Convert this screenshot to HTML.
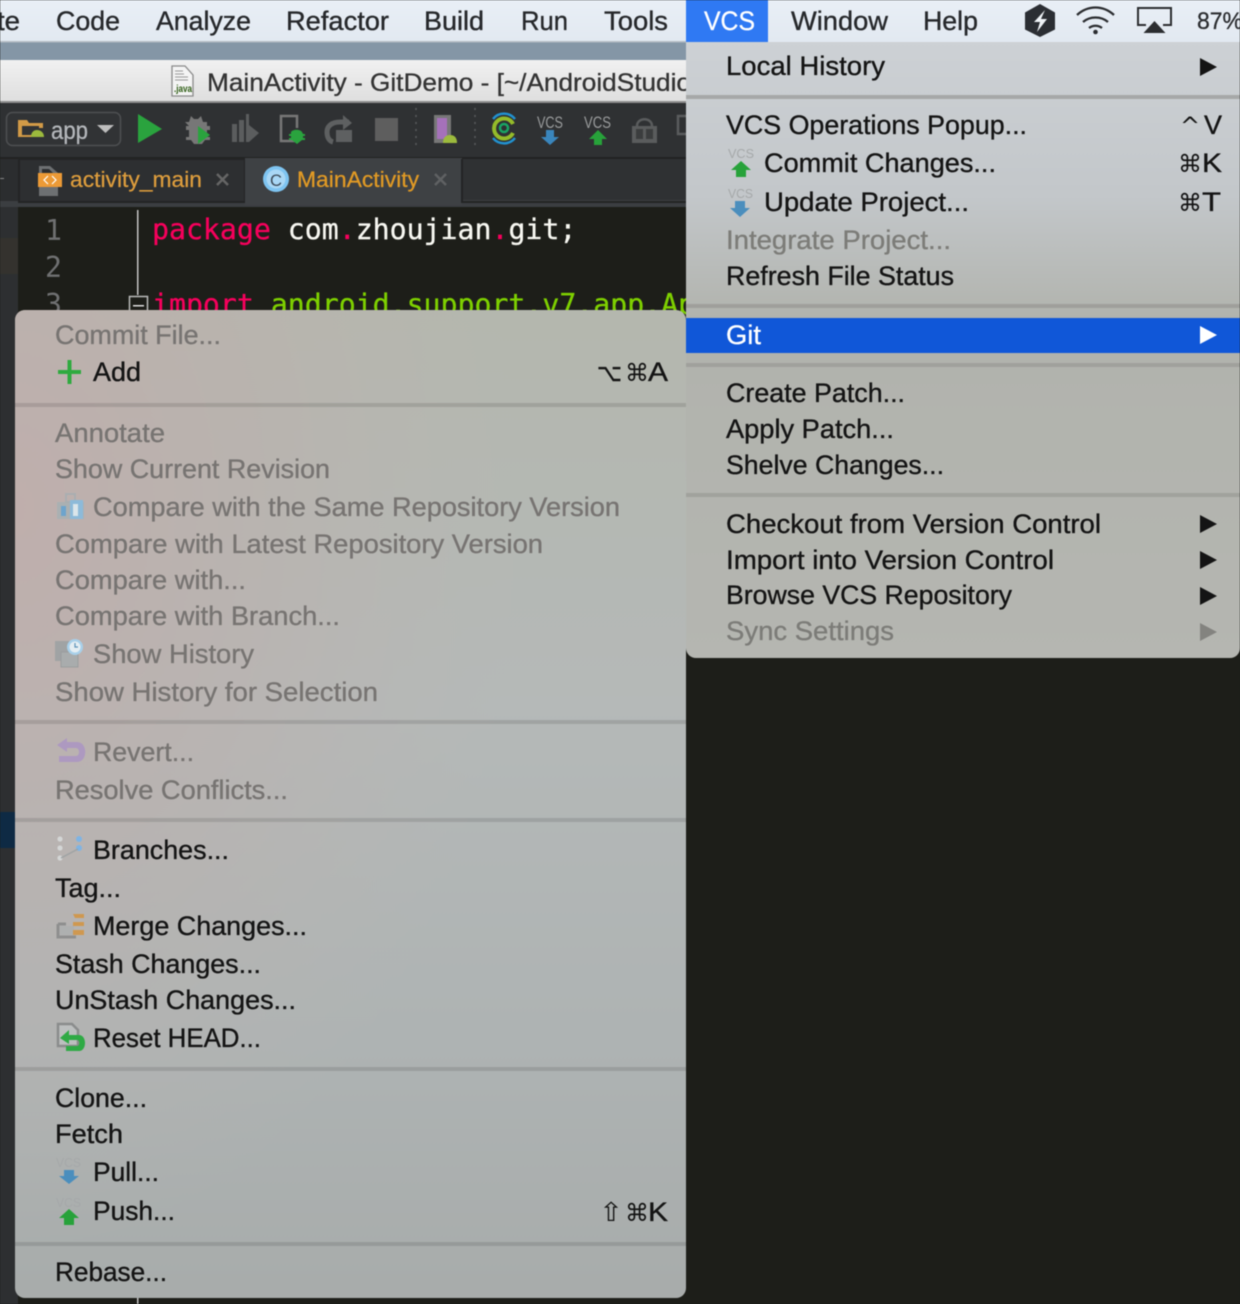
<!DOCTYPE html>
<html><head><meta charset="utf-8"><title>VCS Git menu</title>
<style>
html,body{margin:0;padding:0;background:#1d1e19;width:1240px;height:1304px;overflow:hidden}
svg{display:block;position:absolute;left:0;top:0;filter:blur(.4px)}
text{font-family:"Liberation Sans","DejaVu Sans",sans-serif;font-size:27px;fill:#141414}
text:not([style]):not(.c){stroke:#141414;stroke-width:.35px}
text.d:not([style]){fill:#777472;stroke:#777472}
text.dr:not([style]){fill:#7c7c78;stroke:#7c7c78}
text.m:not([style]){fill:#26282b;stroke:#26282b}
.c{font-family:"DejaVu Sans Mono","Liberation Mono",monospace;font-size:28.200px;stroke-width:.3px}
</style></head><body>
<svg width="1240" height="1304" viewBox="0 0 1240 1304" xmlns="http://www.w3.org/2000/svg">
<defs>
<linearGradient id="bar" x1="0" y1="0" x2="0" y2="1"><stop offset="0" stop-color="#e9eff6"/><stop offset="1" stop-color="#e2e9f1"/></linearGradient>
<linearGradient id="title" x1="0" y1="0" x2="0" y2="1"><stop offset="0" stop-color="#f1f1f1"/><stop offset="1" stop-color="#dedede"/></linearGradient>
<linearGradient id="rm" x1="0" y1="0" x2="0" y2="1"><stop offset="0" stop-color="#cdd1d5"/><stop offset=".25" stop-color="#c3c7ca"/><stop offset=".45" stop-color="#b1b3ad"/><stop offset="1" stop-color="#b5b6b1"/></linearGradient>
<linearGradient id="lm" x1="0" y1="0" x2="0" y2="1"><stop offset="0" stop-color="#b4b7ae"/><stop offset=".4" stop-color="#b5b9b8"/><stop offset=".75" stop-color="#aeb3b3"/><stop offset="1" stop-color="#a8acab"/></linearGradient>
<radialGradient id="pink" cx="0" cy=".2" r=".75"><stop offset="0" stop-color="#c0aeac" stop-opacity=".95"/><stop offset=".5" stop-color="#bdb0ad" stop-opacity=".5"/><stop offset="1" stop-color="#bcb6b2" stop-opacity="0"/></radialGradient>
</defs>

<!-- background -->
<rect width="1240" height="1304" fill="#1d1e19"/>
<rect y="42" width="1240" height="18" fill="#8496a6"/>
<rect y="60" width="1240" height="42" fill="url(#title)"/>
<rect y="101" width="1240" height="2" fill="#8e8e8e"/>
<rect y="103" width="1240" height="55" fill="#2f3133"/>
<rect y="157" width="1240" height="2" fill="#222"/>
<rect y="159" width="1240" height="48" fill="#2f3133"/>
<rect y="200" width="690" height="7" fill="#3b3e41"/>
<rect x="0" y="207" width="18" height="1097" fill="#2d2f31"/>
<rect x="0" y="159" width="18" height="42" fill="#2b2d2f"/>
<rect x="0" y="178" width="4" height="1" fill="#888"/>
<rect x="0" y="238" width="18" height="36" fill="#34322e"/>
<rect x="0" y="812" width="18" height="36" fill="#0e2a44"/>

<!-- title -->
<path d="M172 66h13l8 9v21h-21z" fill="#f4f4f4" stroke="#8a8a8a" stroke-width="1.300"/>
<path d="M175 71h8M175 74h9M175 77h13M175 80h13" stroke="#999"/>
<text x="174" y="92" style="font-size:10px;fill:#2e5d14;font-weight:bold" textLength="18" lengthAdjust="spacingAndGlyphs">.java</text>
<text x="207" y="91" style="font-size:25px;fill:#333;stroke:#333;stroke-width:.3px" textLength="484" lengthAdjust="spacingAndGlyphs">MainActivity - GitDemo - [~/AndroidStudio</text>

<!-- toolbar -->
<rect x="6.500" y="112.500" width="114" height="33" rx="6" fill="#313335" stroke="#4d4f51" stroke-width="1.500"/>
<path d="M18 135v-15h9l2 3h14v5h-4v-2H22v9z M18 135h14v2H18z" fill="#d19a47"/>
<path d="M31 137c0-5 3-7 6-7s7 2 7 7z" fill="#9cba3d"/>
<text x="51" y="139" style="font-size:25px;fill:#b5b8bc;stroke:#b5b8bc;stroke-width:.3px" textLength="37" lengthAdjust="spacingAndGlyphs">app</text>
<path d="M97 125h17l-8.500 8z" fill="#bdbdbd"/>
<path d="M138 114l24 15-24 14z" fill="#2aa33e"/>
<path d="M185 122h4l2-6 3 3h4l3-3 2 6h4v4h3v4h-3v7h3v3h-5l-3 4h-8l-3-4h-5v-3h3v-7h-3v-4h3z" fill="#777"/>
<path d="M198 126l12 9-12 9z" fill="#2aa33e"/>
<path d="M232 124h5v18h-5zM239 120h5v22h-5zM246 114h3v11l10 8-10 9h-3z" fill="#5b5d5e"/>
<path d="M297 128v-12h-16v25h14" fill="none" stroke="#777" stroke-width="2.500"/>
<path d="M291 132c2-3 9-3 11 0l1 2 2 0v2h-2v2h2v2h-3l-5 4-5-4h-3v-2h2v-2h-2v-2h2z" fill="#2aa33e"/>
<path d="M349 122h-9c-8 0-13 4-13 10 0 5 2 9 6 10" fill="none" stroke="#5e6061" stroke-width="5"/>
<path d="M343 115l9 8-9 7z" fill="#5e6061"/>
<rect x="336" y="130" width="16" height="12" fill="#5e6061"/>
<rect x="375" y="118" width="23" height="23" fill="#5e5e5e"/>
<path d="M416 108v42M475 108v42" stroke="#5a5c5e" stroke-width="1.500" stroke-dasharray="2 5"/>
<rect x="434" y="115" width="17" height="28" fill="#777"/>
<rect x="437" y="118" width="10" height="21" fill="#a571ba"/>
<path d="M443 143c0-6 3-8 7-8s7 2 7 8z" fill="#9cba3d"/>
<path d="M493 119a14 14 0 0 1 22 0M493 138a14 14 0 0 0 22 0" fill="none" stroke="#2291cf" stroke-width="2.500"/>
<path d="M513 124a10 10 0 1 0 0 9" fill="none" stroke="#94bb2a" stroke-width="4"/>
<circle cx="504" cy="128" r="4" fill="none" stroke="#19a463" stroke-width="2.500"/>
<text x="537" y="128" style="font-size:17px;fill:#9a9c9d" textLength="26" lengthAdjust="spacingAndGlyphs">VCS</text>
<path d="M546 130h8v7h5l-9 8-9-8h5z" fill="#3a86bd"/>
<text x="584" y="128" style="font-size:17px;fill:#9a9c9d" textLength="27" lengthAdjust="spacingAndGlyphs">VCS</text>
<path d="M598 130l9 9h-5v6h-8v-6h-5z" fill="#27a23a"/>
<path d="M632 126h25v17h-25z" fill="#5a5c5d"/>
<path d="M637 126c0-9 15-9 15 0" fill="none" stroke="#5a5c5d" stroke-width="2.500"/>
<path d="M636 129h7v10h-7zM646 129h7v10h-7z" fill="#3b3d3e"/>
<path d="M678 116h10v18h-10z" fill="none" stroke="#5a5c5d" stroke-width="2.500"/>

<!-- tabs -->
<path d="M19 159H245V202H19z" fill="#2d2f31" stroke="#232425" stroke-width="2"/>
<path d="M39 166h11l8 7v23H39z" fill="#6d7072"/>
<path d="M42 169h7l5 5v6H42z" fill="#2d2f31"/>
<rect x="38" y="173" width="24" height="14" fill="#ec9a36"/>
<path d="M48 176l-4 4 4 4M52 176l4 4-4 4" fill="none" stroke="#fff" stroke-width="1.200"/>
<text x="70" y="187" style="font-size:22px;fill:#dd9d3d;stroke:#dd9d3d;stroke-width:.25px" textLength="132" lengthAdjust="spacingAndGlyphs">activity_main</text>
<path d="M217 174l11 11M228 174l-11 11" stroke="#666" stroke-width="2.500"/>
<rect x="245" y="158" width="217" height="47" fill="#3e4144"/>
<path d="M462 159v43H690" fill="none" stroke="#232425" stroke-width="2"/>
<circle cx="276" cy="179" r="13" fill="#7ec4f1"/>
<circle cx="276" cy="179" r="9.500" fill="#a9d7f5"/>
<text x="270" y="186" style="font-size:17px;fill:#3c4a58" textLength="12" lengthAdjust="spacingAndGlyphs">C</text>
<text x="297" y="187" style="font-size:22px;fill:#e19a25;stroke:#e19a25;stroke-width:.25px" textLength="122" lengthAdjust="spacingAndGlyphs">MainActivity</text>
<path d="M435 174l11 11M446 174l-11 11" stroke="#5f6163" stroke-width="2.500"/>

<!-- editor -->
<rect x="18" y="207" width="672" height="110" fill="#1d1e19"/>
<text class="c" x="45" y="240" style="fill:#6f7071" textLength="17">1</text>
<text class="c" x="45" y="277" style="fill:#6f7071" textLength="17">2</text>
<text class="c" x="45" y="314" style="fill:#6f7071" textLength="17">3</text>
<rect x="137" y="210" width="1.500" height="85" fill="#c3c3c3"/>
<rect x="137" y="1296" width="1.500" height="8" fill="#c3c3c3"/>
<rect x="129.500" y="296.500" width="18" height="18" fill="#1d1e19" stroke="#bbb" stroke-width="1.500"/>
<rect x="133" y="305" width="11" height="1.500" fill="#ddd"/>
<text class="c" x="152" y="239"><tspan fill="#f7005c" stroke="#f7005c">package</tspan><tspan fill="#f8f8f2" stroke="#f8f8f2" dx="17">com</tspan><tspan fill="#f7005c" stroke="#f7005c">.</tspan><tspan fill="#f8f8f2" stroke="#f8f8f2">zhoujian</tspan><tspan fill="#f7005c" stroke="#f7005c">.</tspan><tspan fill="#f8f8f2" stroke="#f8f8f2">git;</tspan></text>
<text class="c" x="152" y="314"><tspan fill="#f7005c" stroke="#f7005c">import</tspan><tspan fill="#7ed000" stroke="#7ed000" dx="17">android.support.v7.app.AppCompat</tspan></text>

<!-- menu bar -->
<rect width="1240" height="42" fill="url(#bar)"/>
<rect y="41" width="686" height="1.500" fill="#b4bcc4"/>
<rect x="686" width="82" height="42" fill="#2f79f3"/>
<text class="m" x="-3" y="30" textLength="23" lengthAdjust="spacingAndGlyphs">te</text>
<text class="m" x="56" y="30" textLength="64" lengthAdjust="spacingAndGlyphs">Code</text>
<text class="m" x="156" y="30" textLength="95" lengthAdjust="spacingAndGlyphs">Analyze</text>
<text class="m" x="286" y="30" textLength="103" lengthAdjust="spacingAndGlyphs">Refactor</text>
<text class="m" x="424" y="30" textLength="60" lengthAdjust="spacingAndGlyphs">Build</text>
<text class="m" x="521" y="30" textLength="47" lengthAdjust="spacingAndGlyphs">Run</text>
<text class="m" x="604" y="30" textLength="64" lengthAdjust="spacingAndGlyphs">Tools</text>
<text x="704" y="30" style="fill:#fff;stroke:#fff;stroke-width:.3px" textLength="51" lengthAdjust="spacingAndGlyphs">VCS</text>
<text class="m" x="791" y="30" textLength="97" lengthAdjust="spacingAndGlyphs">Window</text>
<text class="m" x="923" y="30" textLength="55" lengthAdjust="spacingAndGlyphs">Help</text>
<path d="M1040 4l15 8.500v17L1040 37l-15-7.500v-17z" fill="#2b2e33"/>
<path d="M1045 10l-11 12h6l-3 10 10-13h-6z" fill="#eef2f6"/>
<path d="M1077 15c11-10 26-10 37 0M1083 22c7-6 18-6 25 0M1089 28c4-3 9-3 13 0" fill="none" stroke="#2b2d30" stroke-width="2.300"/>
<circle cx="1095.500" cy="32" r="2.300" fill="#2b2d30"/>
<path d="M1146 25h-8V8h33v17h-8" fill="none" stroke="#2b2d30" stroke-width="2"/>
<path d="M1154.500 21l11 12h-22z" fill="#2b2d30"/>
<text x="1197" y="29" style="font-size:24px;fill:#2b2d30;stroke:#2b2d30;stroke-width:.3px" textLength="46" lengthAdjust="spacingAndGlyphs">87%</text>

<!-- right menu -->
<path d="M686 42H1240V648a10 10 0 0 1-10 10H696a10 10 0 0 1-10-10z" fill="url(#rm)"/>
<rect x="686" y="95" width="554" height="4" fill="#a6a8a8"/>
<rect x="686" y="304" width="554" height="4" fill="#9f9f9b"/>
<rect x="686" y="318" width="554" height="35" fill="#1057d8"/>
<rect x="686" y="363" width="554" height="4" fill="#a0a19c"/>
<rect x="686" y="493" width="554" height="4" fill="#a1a29d"/>
<text x="726" y="75" textLength="159" lengthAdjust="spacingAndGlyphs">Local History</text>
<path d="M1200 58l17 9-17 9z" fill="#141414"/>
<text x="726" y="134" textLength="301" lengthAdjust="spacingAndGlyphs">VCS Operations Popup...</text>
<text x="1180" y="134" style="font-family:'DejaVu Sans',sans-serif;font-size:24px" textLength="18">^</text>
<text x="1204" y="134" textLength="18" lengthAdjust="spacingAndGlyphs">V</text>
<text x="728" y="158" style="font-size:13px;fill:#a5a8a9" textLength="26" lengthAdjust="spacingAndGlyphs">VCS</text>
<path d="M741 161l10 9h-5v7h-10v-7h-5z" fill="#27a23a"/>
<text x="764" y="172" textLength="232" lengthAdjust="spacingAndGlyphs">Commit Changes...</text>
<text x="1178" y="172" style="font-family:'DejaVu Sans',sans-serif;font-size:24px" textLength="22">⌘</text>
<text x="1202" y="172" textLength="20" lengthAdjust="spacingAndGlyphs">K</text>
<text x="728" y="198" style="font-size:13px;fill:#a5a8a9" textLength="25" lengthAdjust="spacingAndGlyphs">VCS</text>
<path d="M735 201h10v7h5l-10 9-10-9h5z" fill="#4b8ebd"/>
<text x="764" y="211" textLength="205" lengthAdjust="spacingAndGlyphs">Update Project...</text>
<text x="1178" y="211" style="font-family:'DejaVu Sans',sans-serif;font-size:24px" textLength="22">⌘</text>
<text x="1202" y="211" textLength="19" lengthAdjust="spacingAndGlyphs">T</text>
<text class="dr" x="726" y="249" textLength="225" lengthAdjust="spacingAndGlyphs">Integrate Project...</text>
<text x="726" y="285" textLength="228" lengthAdjust="spacingAndGlyphs">Refresh File Status</text>
<text x="726" y="344" style="fill:#fff;stroke:#fff;stroke-width:.3px" textLength="35" lengthAdjust="spacingAndGlyphs">Git</text>
<path d="M1200 326l17 9-17 9z" fill="#fff"/>
<text x="726" y="402" textLength="179" lengthAdjust="spacingAndGlyphs">Create Patch...</text>
<text x="726" y="438" textLength="168" lengthAdjust="spacingAndGlyphs">Apply Patch...</text>
<text x="726" y="474" textLength="218" lengthAdjust="spacingAndGlyphs">Shelve Changes...</text>
<text x="726" y="533" textLength="375" lengthAdjust="spacingAndGlyphs">Checkout from Version Control</text>
<path d="M1200 515l17 9-17 9z" fill="#141414"/>
<text x="726" y="569" textLength="328" lengthAdjust="spacingAndGlyphs">Import into Version Control</text>
<path d="M1200 551l17 9-17 9z" fill="#141414"/>
<text x="726" y="604" textLength="286" lengthAdjust="spacingAndGlyphs">Browse VCS Repository</text>
<path d="M1200 587l17 9-17 9z" fill="#141414"/>
<text class="dr" x="726" y="640" textLength="168" lengthAdjust="spacingAndGlyphs">Sync Settings</text>
<path d="M1200 623l17 9-17 9z" fill="#83837f"/>

<!-- left menu -->
<rect x="15" y="310" width="671" height="988" rx="10" fill="url(#lm)"/>
<rect x="15" y="310" width="671" height="988" rx="10" fill="url(#pink)"/>
<g fill="#000" fill-opacity=".11">
<rect x="15" y="403" width="671" height="4"/>
<rect x="15" y="720" width="671" height="4"/>
<rect x="15" y="818" width="671" height="4"/>
<rect x="15" y="1067" width="671" height="4"/>
<rect x="15" y="1242" width="671" height="4"/>
</g>
<text class="d" x="55" y="344" textLength="166" lengthAdjust="spacingAndGlyphs">Commit File...</text>
<path d="M58 372h23M69.500 360v24" stroke="#2faa3f" stroke-width="4"/>
<text x="93" y="381" textLength="48" lengthAdjust="spacingAndGlyphs">Add</text>
<text x="597" y="381" style="font-family:'DejaVu Sans',sans-serif;font-size:24px;fill:#141414;stroke:#141414;stroke-width:.4px" textLength="25" lengthAdjust="spacingAndGlyphs">⌥</text>
<text x="625" y="381" style="font-family:'DejaVu Sans',sans-serif;font-size:24px" textLength="22">⌘</text>
<text x="648" y="381" textLength="20" lengthAdjust="spacingAndGlyphs">A</text>
<text class="d" x="55" y="442" textLength="110" lengthAdjust="spacingAndGlyphs">Annotate</text>
<text class="d" x="55" y="478" textLength="275" lengthAdjust="spacingAndGlyphs">Show Current Revision</text>
<rect x="57" y="502" width="27" height="17" fill="#aab0b2"/>
<rect x="66" y="494" width="9" height="8" fill="none" stroke="#a9aeb0" stroke-width="2"/>
<rect x="70" y="500" width="13" height="19" fill="#8dbad9"/>
<rect x="61" y="506" width="5" height="10" fill="#6da4cc"/><rect x="73" y="504" width="5" height="12" fill="#dbe5ea"/>
<text class="d" x="93" y="516" textLength="527" lengthAdjust="spacingAndGlyphs">Compare with the Same Repository Version</text>
<text class="d" x="55" y="553" textLength="488" lengthAdjust="spacingAndGlyphs">Compare with Latest Repository Version</text>
<text class="d" x="55" y="589" textLength="191" lengthAdjust="spacingAndGlyphs">Compare with...</text>
<text class="d" x="55" y="625" textLength="285" lengthAdjust="spacingAndGlyphs">Compare with Branch...</text>
<rect x="55" y="641" width="20" height="20" fill="#a0a3a4"/>
<rect x="61" y="652" width="17" height="15" fill="#a9acad" stroke="#9a9d9e"/>
<circle cx="75" cy="647" r="8" fill="#a8d0ea"/><circle cx="75" cy="647" r="5.500" fill="#e5eef3"/>
<path d="M75 643v4h3" stroke="#5d92b8" fill="none" stroke-width="1.200"/>
<text class="d" x="93" y="663" textLength="161" lengthAdjust="spacingAndGlyphs">Show History</text>
<text class="d" x="55" y="701" textLength="323" lengthAdjust="spacingAndGlyphs">Show History for Selection</text>
<path d="M67 738l-10 7 10 7v-4h9c4 0 4 8 0 8H59v6h18c11 0 11-20 0-20H67z" fill="#ad99c0"/>
<text class="d" x="93" y="761" textLength="101" lengthAdjust="spacingAndGlyphs">Revert...</text>
<text class="d" x="55" y="799" textLength="233" lengthAdjust="spacingAndGlyphs">Resolve Conflicts...</text>
<g fill="#d4d6d6"><circle cx="60" cy="839" r="2.600"/><circle cx="60" cy="848" r="2.600"/><circle cx="60" cy="858" r="2.600"/></g>
<g fill="#7fb4e4"><circle cx="79" cy="839" r="3"/><circle cx="79" cy="848" r="3"/></g>
<path d="M61 858l17-9" stroke="#9fa3a4" stroke-width="1.500"/>
<text x="93" y="859" textLength="136" lengthAdjust="spacingAndGlyphs">Branches...</text>
<text x="55" y="897" textLength="66" lengthAdjust="spacingAndGlyphs">Tag...</text>
<path d="M58 924h8M58 924v13h18" fill="none" stroke="#8e8f8f" stroke-width="3"/>
<rect x="60" y="926" width="14" height="9" fill="#aeb0b0"/>
<path d="M73 914h11v4h-9zM73 922h11v4H73zM73 930h11v5H73z" fill="#cf9850"/>
<text x="93" y="935" textLength="214" lengthAdjust="spacingAndGlyphs">Merge Changes...</text>
<text x="55" y="973" textLength="206" lengthAdjust="spacingAndGlyphs">Stash Changes...</text>
<text x="55" y="1009" textLength="241" lengthAdjust="spacingAndGlyphs">UnStash Changes...</text>
<path d="M58 1024h14l6 6v16H58z" fill="#bcbfbf" stroke="#8a8c8c" stroke-width="2.500"/>
<path d="M69 1030l-9 8 9 6v-4h8c3 0 3 6 0 6H66v5h13c8 0 8-16 0-16H69z" fill="#2faa45"/>
<text x="93" y="1047" textLength="168" lengthAdjust="spacingAndGlyphs">Reset HEAD...</text>
<text x="55" y="1107" textLength="92" lengthAdjust="spacingAndGlyphs">Clone...</text>
<text x="55" y="1143" textLength="68" lengthAdjust="spacingAndGlyphs">Fetch</text>
<text x="56" y="1167" style="font-size:13px;fill:#a5a8a9" textLength="25" lengthAdjust="spacingAndGlyphs">VCS</text>
<path d="M64 1170h10v6h5l-10 8-10-8h5z" fill="#4b8ebd"/>
<text x="93" y="1181" textLength="66" lengthAdjust="spacingAndGlyphs">Pull...</text>
<text x="56" y="1207" style="font-size:13px;fill:#a5a8a9" textLength="25" lengthAdjust="spacingAndGlyphs">VCS</text>
<path d="M69 1209l10 9h-5v7H64v-7h-5z" fill="#27a23a"/>
<text x="93" y="1220" textLength="82" lengthAdjust="spacingAndGlyphs">Push...</text>
<text x="599" y="1221" style="font-family:'DejaVu Sans',sans-serif;font-size:26px;fill:#141414" textLength="24" lengthAdjust="spacingAndGlyphs">⇧</text>
<text x="625" y="1221" style="font-family:'DejaVu Sans',sans-serif;font-size:24px" textLength="22">⌘</text>
<text x="648" y="1221" textLength="20" lengthAdjust="spacingAndGlyphs">K</text>
<text x="55" y="1281" textLength="112" lengthAdjust="spacingAndGlyphs">Rebase...</text>
</svg>
</body></html>
